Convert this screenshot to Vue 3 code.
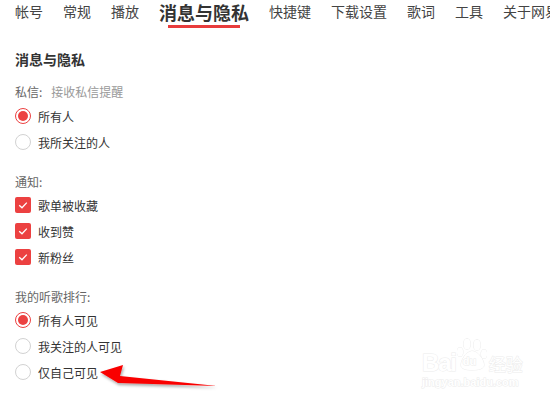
<script setup>
const tabs = [
  { label: '帐号' }, { label: '常规' }, { label: '播放' }, { label: '消息与隐私', active: true },
  { label: '快捷键' }, { label: '下载设置' }, { label: '歌词' }, { label: '工具' }, { label: '关于网易云音乐' }
]
const groups = [
  { type: 'radio', title: '私信:', hint: '接收私信提醒', items: [{ t: '所有人', on: true }, { t: '我所关注的人' }] },
  { type: 'check', title: '通知:', items: [{ t: '歌单被收藏', on: true }, { t: '收到赞', on: true }, { t: '新粉丝', on: true }] },
  { type: 'radio', title: '我的听歌排行:', items: [{ t: '所有人可见', on: true }, { t: '我关注的人可见' }, { t: '仅自己可见' }] }
]
</script>

<template>
  <div class="page">
    <nav class="tabs">
      <span v-for="t in tabs" :key="t.label" class="tab" :class="{ active: t.active }">{{ t.label }}</span>
    </nav>
    <main class="content">
      <h2 class="heading">消息与隐私</h2>
      <section v-for="g in groups" :key="g.title" class="group">
        <div class="label">{{ g.title }}<span v-if="g.hint" class="hint">{{ g.hint }}</span></div>
        <div v-for="i in g.items" :key="i.t" class="row">
          <span v-if="g.type === 'radio'" class="radio" :class="{ on: i.on }"></span>
          <span v-else class="check">
            <svg width="16" height="16" viewBox="0 0 16 16"><path d="M4.2 8.2 7 10.8 11.8 5.6" fill="none" stroke="#fff" stroke-width="1.3"/></svg>
          </span>
          <span class="text">{{ i.t }}</span>
        </div>
      </section>
    </main>
    <svg class="arrow" width="130" height="40" viewBox="0 0 130 40">
      <defs>
        <filter id="sh" x="-10%" y="-30%" width="120%" height="170%"><feDropShadow dx="1" dy="2" stdDeviation="1.5" flood-color="#000" flood-opacity="0.35"/></filter>
      </defs>
      <path d="M0 12 23 5 20 16 117 26 20 23 18 23Z" fill="#f90000" filter="url(#sh)"/>
    </svg>
    <div class="mark">
      <div class="mark-top">
        <span class="bai">Bai</span>
        <span class="paw">
          <svg width="30" height="34" viewBox="0 0 30 34"><g fill="#fff" stroke="#ececec" stroke-width="1"><ellipse cx="3" cy="15" rx="3" ry="4.5"/><ellipse cx="10" cy="7" rx="3.5" ry="5.5"/><ellipse cx="20" cy="8" rx="3.5" ry="5.5"/><ellipse cx="27" cy="17" rx="3" ry="4.5"/><path d="M15 14C8 15 4 24 4 28 4 32 9 33 15 33S27 32 27 28C27 23 21 14 15 14Z"/></g></svg>
          <span class="du">du</span>
        </span>
        <span class="jy">经验</span>
      </div>
      <div class="mark-url">jingyan.baidu.com</div>
    </div>
  </div>
</template>

<style scoped>
.page {
  position: relative;
  width: 550px;
  height: 400px;
  overflow: hidden;
  background: #fff;
  color: #333;
  font-family: "Noto Sans CJK SC", "Liberation Sans", sans-serif;
}
.tabs {
  display: flex;
  align-items: flex-start;
  gap: 20px;
  padding: 2px 0 0 15px;
  height: 28px;
  white-space: nowrap;
}
.tab {
  font-size: 14px;
  line-height: 19px;
  color: #444;
}
.tab.active {
  position: relative;
  font-size: 18px;
  font-weight: 700;
  line-height: 20px;
  color: #333;
}
.tab.active::after {
  content: "";
  position: absolute;
  left: 9px;
  width: 72px;
  top: 23px;
  height: 3px;
  background: #e83c3c;
}
.content { padding: 19px 15px 0; }
.heading {
  margin: 0 0 14px;
  font-size: 14px;
  line-height: 20px;
  font-weight: 700;
  color: #333;
}
.group { margin-bottom: 18px; }
.label {
  font-size: 12px;
  line-height: 18px;
  margin-bottom: 1px;
  color: #666;
}
.group:first-of-type .label { margin-bottom: 2px; }
.hint { margin-left: 9px; color: #999; }
.row {
  display: flex;
  align-items: center;
  gap: 7px;
  height: 26px;
}
.text { font-size: 12px; color: #333; }
.radio {
  box-sizing: border-box;
  width: 16px;
  height: 16px;
  border: 1px solid #d2d2d2;
  border-radius: 50%;
  background: #fff;
}
.radio.on {
  border-color: #ec4141;
  padding: 2px;
  background: #ec4141 content-box;
}
.check {
  width: 16px;
  height: 16px;
  border-radius: 2px;
  background: #ec4141;
  display: block;
}
.check svg { display: block; }
.arrow {
  position: absolute;
  left: 100px;
  top: 360px;
}
.mark {
  position: absolute;
  left: 422px;
  top: 340px;
  width: 120px;
  color: #fff;
  -webkit-text-stroke: 1px #ececec;
  paint-order: stroke fill;
}
.mark-top { display: flex; align-items: flex-end; height: 33px; }
.bai { font: 700 24px/20px "Liberation Sans", sans-serif; letter-spacing: -1.2px; }
.paw { position: relative; width: 30px; height: 34px; margin-left: 1px; }
.paw svg { position: absolute; left: 0; top: -2px; }
.du {
  position: absolute;
  left: 6px;
  top: 15px;
  font: 700 11px/14px "Liberation Sans", sans-serif;
}
.jy { font-size: 17px; line-height: 18px; margin-left: 2px; }
.mark-url { font: 700 11px/13px "Liberation Sans", sans-serif; margin-top: 3px; }
</style>
